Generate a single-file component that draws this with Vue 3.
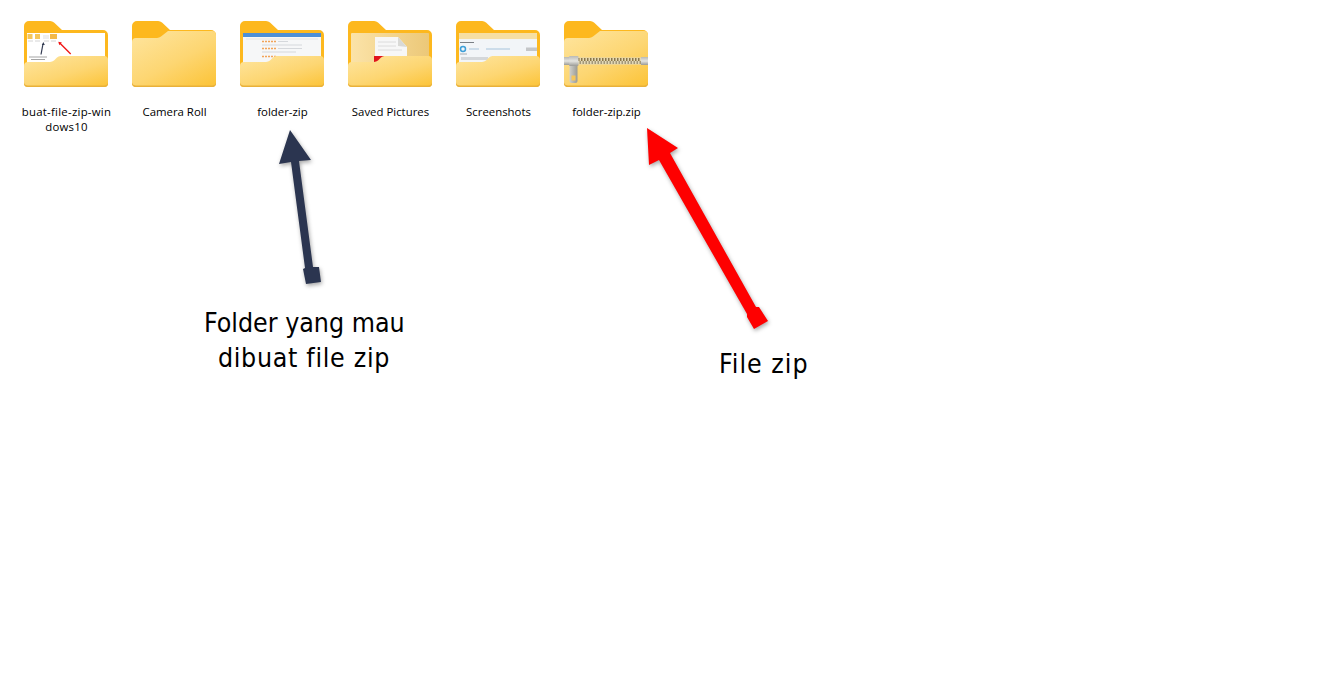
<template>
  <div class="page">
    <svg class="defs" width="0" height="0" aria-hidden="true">
      <defs>
        <linearGradient id="flap" x1="0.1" y1="0" x2="0.9" y2="1">
          <stop offset="0" stop-color="#fee49c" />
          <stop offset="0.55" stop-color="#fdd672" />
          <stop offset="1" stop-color="#fcc53c" />
        </linearGradient>
        <linearGradient id="metal" x1="0" y1="0" x2="0" y2="1">
          <stop offset="0" stop-color="#b9b9b5" />
          <stop offset="0.5" stop-color="#e4e4e0" />
          <stop offset="1" stop-color="#9b9b97" />
        </linearGradient>
        <linearGradient id="puller" x1="0" y1="0" x2="1" y2="0">
          <stop offset="0" stop-color="#d0d0cb" />
          <stop offset="1" stop-color="#9a9a94" />
        </linearGradient>
        <linearGradient id="inner" x1="0" y1="0" x2="1" y2="0">
          <stop offset="0" stop-color="#fbe3a8" />
          <stop offset="1" stop-color="#ecc878" />
        </linearGradient>
      </defs>
    </svg>

    <div class="folders">
      <div v-for="item in items" :key="item.name" class="folder">
        <svg class="folder-icon" width="84" height="66" viewBox="0 0 84 66">
          <path :d="backPath" fill="#fdb81e" />
          <path d="M0 60v2a4 4 0 0 0 4 4h76a4 4 0 0 0 4-4v-2z" fill="#e9b13a" />

          <g v-if="item.kind === 'zipcut'">
            <rect x="3" y="12" width="78" height="32" fill="#fff" />
            <rect x="3.500" y="13" width="5" height="5" fill="#f5c65a" />
            <rect x="11" y="13" width="5" height="5" fill="#f5c65a" />
            <rect x="19" y="14" width="6" height="4" fill="#eeeeee" />
            <rect x="26" y="13" width="7" height="5" fill="#f3b94a" />
            <path d="M4 20h5M11 20h5M20 20h5M27 20h5" stroke="#d4d4d4" stroke-width="1" />
            <path d="M17 33.500 19 23" stroke="#333b52" stroke-width="1.200" />
            <path d="m19.300 21-1.500 3h3z" fill="#333b52" />
            <path d="M46.700 33 36 22.300" stroke="#f01010" stroke-width="1.300" />
            <path d="m34.300 20.700 1 3.500 2.600-2.600z" fill="#f01010" />
            <path d="M5 36h18M7 38.500h14" stroke="#a5a5a5" stroke-width="1" />
          </g>

          <g v-if="item.kind === 'page'">
            <rect x="3" y="12" width="78" height="32" fill="#f6f7f8" />
            <rect x="3" y="12" width="78" height="4" fill="#4c8fd8" />
            <path d="M6 18h72" stroke="#e6e6e6" stroke-width="1" />
            <path d="M22 20.500h14M22 27.500h14M22 35.500h14" stroke="#f2a45a" stroke-width="1.500" stroke-dasharray="2 1" />
            <path d="M38 20.500h10M22 24h40M38 27.500h24M22 31h34M38 35.500h22" stroke="#d5d8dc" stroke-width="1" />
          </g>

          <g v-if="item.kind === 'doc'">
            <rect x="3" y="12" width="78" height="32" rx="1" fill="url(#inner)" />
            <path d="M27 16h23l9 10v12H27z" fill="#f7f7f7" />
            <path d="M50 16v9l9 1z" fill="#d9d9d6" />
            <path d="M30 21h18M30 25h18M30 29h24" stroke="#dcdcdc" stroke-width="1" />
            <rect x="26" y="35" width="12" height="6" fill="#e0141c" />
          </g>

          <g v-if="item.kind === 'dialog'">
            <rect x="3" y="12" width="78" height="32" fill="#f2f5f8" />
            <rect x="3" y="12" width="78" height="6" fill="#f6dfa4" />
            <path d="M4 21.500h14" stroke="#7a7f85" stroke-width="1" />
            <circle cx="7" cy="28" r="2.500" fill="none" stroke="#3d9fd8" stroke-width="1.500" />
            <path d="M13 28h10M30 28h24" stroke="#a7c4dc" stroke-width="1" />
            <rect x="70" y="26.500" width="11" height="3.500" fill="#c4c6c8" />
            <path d="M4 33h7" stroke="#a8acb0" stroke-width="1" />
            <rect x="5" y="36" width="27" height="3" fill="#d4d7da" />
          </g>

          <path :d="item.kind === 'closed' || item.kind === 'zip' ? closedPath : openPath" fill="url(#flap)" />
          <path d="M0 61.500V62a4 4 0 0 0 4 4h76a4 4 0 0 0 4-4v-.5a4 4 0 0 1-4 3H4a4 4 0 0 1-4-3z" fill="#e9b13a" />

          <g v-if="item.kind === 'zip'">
            <rect x="0" y="36" width="6" height="8" fill="url(#metal)" />
            <rect x="77" y="36" width="7" height="8" fill="url(#metal)" />
            <rect x="14" y="36.500" width="63" height="7" fill="#e3d8b4" />
            <path d="M14 38.500h63" stroke="#8a7648" stroke-width="3" stroke-dasharray="1.500 1.500" />
            <path d="M14 41.500h63" stroke="#a3987a" stroke-width="3" stroke-dasharray="1.500 1.500" stroke-dashoffset="1.500" />
            <rect x="5" y="35" width="9.500" height="10" rx="1" fill="url(#metal)" />
            <path d="M5.500 45h8v15a2 2 0 0 1-2 2h-4a2 2 0 0 1-2-2z" fill="url(#puller)" />
            <rect x="7.500" y="54.500" width="4" height="5" fill="#f5c65a" />
          </g>
        </svg>
        <div class="label" :class="{ long: item.kind === 'zipcut' }">{{ item.name }}</div>
      </div>
    </div>

    <svg class="arrows" width="1317" height="678" viewBox="0 0 1317 678">
      <polygon class="arrow" fill="#2b3550" points="290,130 311,160 299,161 313,267 319,267 321,282 306,284 303,269 305,268 291,162 279,164" />
      <polygon class="arrow" fill="#fe0000" points="647,128 678,148 670,153 756,307 759,307 768,321 754,329 747,317 747,314 659,160 649,165" />
    </svg>

    <div class="note note-left">Folder yang mau<br /><span class="spread">dibuat file zip</span></div>
    <div class="note note-right"><span class="spread">File zip</span></div>
  </div>
</template>

<script setup>
const items = [
  { name: "buat-file-zip-win\ndows10", kind: "zipcut" },
  { name: "Camera Roll", kind: "closed" },
  { name: "folder-zip", kind: "page" },
  { name: "Saved Pictures", kind: "doc" },
  { name: "Screenshots", kind: "dialog" },
  { name: "folder-zip.zip", kind: "zip" },
];

const backPath =
  "M0 5a5 5 0 0 1 5-5h21a6 6 0 0 1 4 1.500L38 9h41a5 5 0 0 1 5 5v48H0z";
const closedPath =
  "M0 21a4 4 0 0 1 4-4h21a7 7 0 0 0 4-1.500L36 10h44a4 4 0 0 1 4 4v48a4 4 0 0 1-4 3H4a4 4 0 0 1-4-3z";
const openPath =
  "M0 45a4 4 0 0 1 4-4h22a7 7 0 0 0 4-1.500l3-3a5 5 0 0 1 3.500-1.500H80a4 4 0 0 1 4 4v24a4 4 0 0 1-4 3H4a4 4 0 0 1-4-3z";
</script>

<style>
html,
body {
  background: #fff;
}
</style>

<style scoped>
.page {
  position: relative;
  width: 1317px;
  height: 678px;
  overflow: hidden;
  background: #fff;
  color: #000;
  font-family: "Open Sans", "Noto Sans", sans-serif;
}

.defs {
  position: absolute;
}

.folders {
  display: flex;
  gap: 8px;
  padding: 21px 0 0 16px;
}

.folder {
  width: 100px;
  display: flex;
  flex-direction: column;
  align-items: center;
}

.folder-icon {
  display: block;
}

.label {
  margin-top: 17px;
  padding-left: 1px;
  font-size: 11.400px;
  line-height: 15px;
  text-align: center;
  white-space: pre-line;
}

.label.long {
  letter-spacing: 0.25px;
}

.arrows {
  position: absolute;
  top: 0;
  left: 0;
}

.arrow {
  filter: drop-shadow(1px 2px 2px rgba(0, 0, 0, 0.35));
}

.note {
  position: absolute;
  font-family: "DejaVu Sans", sans-serif;
  font-stretch: condensed;
  font-variant-ligatures: none;
  font-size: 26.500px;
  line-height: 35px;
  text-align: center;
  white-space: nowrap;
}

.spread {
  letter-spacing: 0.7px;
}

.note-left {
  left: 204px;
  top: 305px;
  width: 200px;
}

.note-right {
  left: 719px;
  top: 346px;
  width: 89px;
}

.note-right .spread {
  letter-spacing: 1px;
}
</style>
